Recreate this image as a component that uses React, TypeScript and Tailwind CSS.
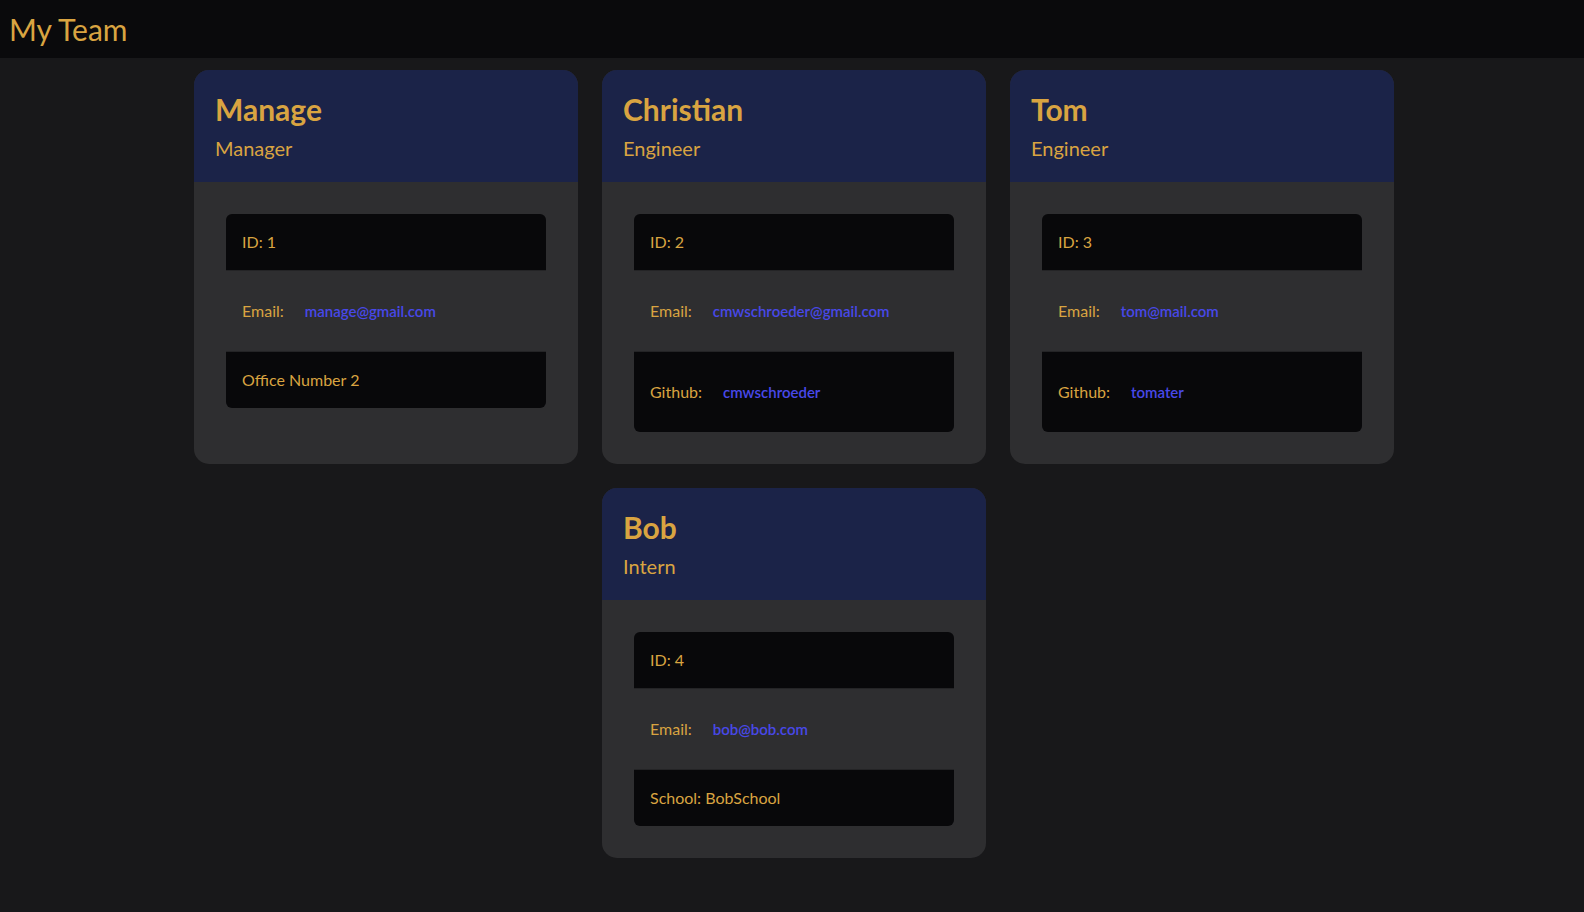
import React from "react";

type Member = {
  name: string;
  role: string;
  id: number;
  email: string;
  extra: { kind: "text"; text: string } | { kind: "github"; user: string };
};

const members: Member[] = [
  { name: "Manage", role: "Manager", id: 1, email: "manage@gmail.com", extra: { kind: "text", text: "Office Number 2" } },
  { name: "Christian", role: "Engineer", id: 2, email: "cmwschroeder@gmail.com", extra: { kind: "github", user: "cmwschroeder" } },
  { name: "Tom", role: "Engineer", id: 3, email: "tom@mail.com", extra: { kind: "github", user: "tomater" } },
  { name: "Bob", role: "Intern", id: 4, email: "bob@bob.com", extra: { kind: "text", text: "School: BobSchool" } },
];

function Card({ m }: { m: Member }) {
  return (
    <div className="w-[384px] rounded-[15px] overflow-hidden bg-[#2e2e30] flex flex-col">
      <div className="bg-[#1b2348] h-[112px] pl-[21px] pt-[20px]">
        <h2 className="text-[30px] leading-[38px] font-bold text-[#d9a441]">{m.name}</h2>
        <div className="text-[20px] leading-[24px] mt-[8px] text-[#d9a441]">{m.role}</div>
      </div>
      <div className="p-[32px] flex-1">
        <div className="flex flex-col text-[16px] text-[#d9a441]">
          <div className="h-[57px] bg-[#08080a] rounded-t-[6px] flex items-center px-[16px] border-b border-[#242426]">
            ID: {m.id}
          </div>
          <div className="h-[80px] flex items-center px-[16px]">
            <span>Email:</span>
            <a className="ml-[21px] text-[15px] font-semibold text-[#4848e8]" href="#">{m.email}</a>
          </div>
          {m.extra.kind === "text" ? (
            <div className="h-[57px] bg-[#08080a] rounded-b-[6px] flex items-center px-[16px] border-t border-[#242426]">
              {m.extra.text}
            </div>
          ) : (
            <div className="h-[81px] bg-[#08080a] rounded-b-[6px] flex items-center px-[16px] border-t border-[#242426]">
              <span>Github:</span>
              <a className="ml-[21px] text-[15px] font-semibold text-[#4848e8]" href="#">{m.extra.user}</a>
            </div>
          )}
        </div>
      </div>
    </div>
  );
}

export default function App() {
  return (
    <div className="min-h-[912px] bg-[#18181a]" style={{ fontFamily: "Lato, 'Open Sans', sans-serif" }}>
      <header className="h-[58px] bg-[#0a0a0c] flex items-center pl-[9px]">
        <h1 className="text-[30px] text-[#d9a441] leading-none">My Team</h1>
      </header>
      <main className="pt-[12px] pb-[24px] flex flex-wrap justify-center gap-[24px] pl-[194px] pr-[190px]">
        {members.map((m) => (
          <Card key={m.id} m={m} />
        ))}
      </main>
    </div>
  );
}
